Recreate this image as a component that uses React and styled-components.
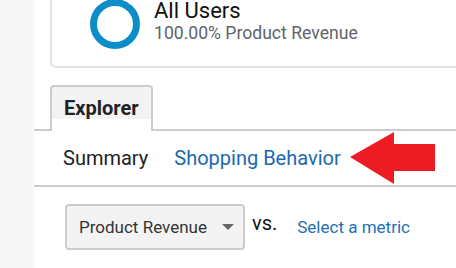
import React from 'react';
import styled, { createGlobalStyle } from 'styled-components';

const GlobalStyle = createGlobalStyle`
    html, body {
        margin:0;
        padding:0;
        background:#fff;
        font-family:Roboto, "Liberation Sans", sans-serif;
        overflow:hidden;
    }
`

const Page = styled.div`
    display:flex;
    width:456px;
    height:268px;
    overflow:hidden;
`

const SideStrip = styled.div`
    width:34px;
    flex-shrink:0;
    background:#f7f7f7;
`

const Main = styled.div`
    flex:1;
    display:flex;
    flex-direction:column;
    min-width:0;
`

const SegmentCard = styled.div`
    margin:-20px -10px 0 16px;
    height:88px;
    box-sizing:border-box;
    padding:17px 0 0 38px;
    border:2px solid #e2e2e2;
    border-radius:6px;
    display:flex;
    align-items:flex-start;
    gap:14px;
`

const Ring = styled.div`
    width:50px;
    height:50px;
    box-sizing:border-box;
    border:7px solid #0b8dc8;
    border-radius:50%;
    flex-shrink:0;
`

const SegmentText = styled.div`
    display:flex;
    flex-direction:column;
    h3{
        margin:0;
        font-size:22px;
        line-height:24px;
        font-weight:400;
        color:#111;
    }
    span{
        font-size:17.6px;
        line-height:20px;
        color:#5f6368;
        white-space:nowrap;
    }
`

const TabBar = styled.div`
    margin-top:17px;
    display:flex;
    padding-left:16px;
    border-bottom:2px solid #cccccc;
`

const Tab = styled.div`
    margin-bottom:-2px;
    padding:9px 12px 11px;
    border:2px solid #cccccc;
    border-bottom:none;
    border-radius:4px 4px 0 0;
    background:linear-gradient(#f3f3f3, #f3f3f3 72%, #fff 73%);
    font-size:20px;
    line-height:24px;
    font-weight:700;
    color:#222;
`

const SubNav = styled.div`
    position:relative;
    display:flex;
    gap:26px;
    padding:15px 0 15px 29px;
    border-bottom:2px solid #cccccc;
`

const NavItem = styled.span`
    font-size:20px;
    line-height:24px;
    color:${p => p.$link ? '#1c68b0' : '#222'};
    white-space:nowrap;
`

const Pointer = styled.svg`
    position:absolute;
    left:315px;
    top:0;
`

const MetricRow = styled.div`
    margin-top:17px;
    padding-left:31px;
    display:flex;
    align-items:center;
`

const Dropdown = styled.div`
    display:flex;
    align-items:center;
    gap:15px;
    height:46px;
    box-sizing:border-box;
    padding:0 9px 0 12px;
    border:2px solid #cccccc;
    border-radius:4px;
    background:#f3f3f3;
    font-size:17px;
    line-height:20px;
    color:#333;
    white-space:nowrap;
`

const Caret = styled.span`
    width:0;
    height:0;
    border-left:6px solid transparent;
    border-right:6px solid transparent;
    border-top:6px solid #666;
`

const VsLabel = styled.span`
    margin:0 20px 8px 7px;
    font-size:20px;
    line-height:24px;
    color:#111;
`

const MetricLink = styled.span`
    font-size:17px;
    line-height:20px;
    color:#2270b6;
    white-space:nowrap;
`

const App = () => {
    return (
        <Page>
            <GlobalStyle />
            <SideStrip />
            <Main>
                <SegmentCard>
                    <Ring />
                    <SegmentText>
                        <h3>All Users</h3>
                        <span>100.00% Product Revenue</span>
                    </SegmentText>
                </SegmentCard>

                <TabBar>
                    <Tab>Explorer</Tab>
                </TabBar>

                <SubNav>
                    <NavItem>Summary</NavItem>
                    <NavItem $link>Shopping Behavior</NavItem>
                    <Pointer width="86" height="54" viewBox="0 0 86 54">
                        <polygon points="1,26 45,1 45,13 86,13 86,40 45,40 45,53" fill="#ed1c24" />
                    </Pointer>
                </SubNav>

                <MetricRow>
                    <Dropdown>
                        Product Revenue
                        <Caret />
                    </Dropdown>
                    <VsLabel>vs.</VsLabel>
                    <MetricLink>Select a metric</MetricLink>
                </MetricRow>
            </Main>
        </Page>
    )
}

export default App;
